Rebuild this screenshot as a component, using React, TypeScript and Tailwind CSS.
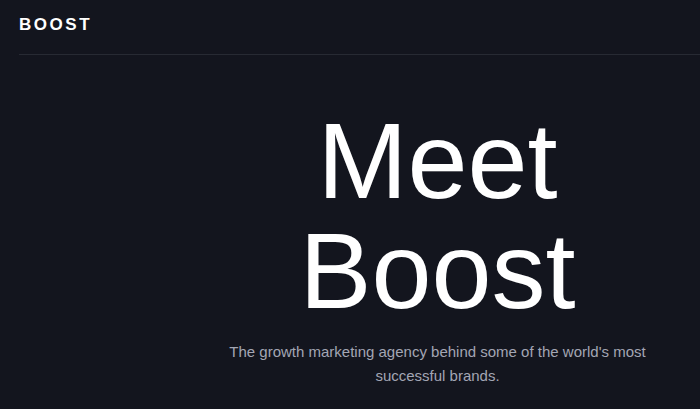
export default function App() {
  return (
    <div
      className="min-h-screen bg-[#13151e] text-white"
      style={{ fontFamily: '"Liberation Sans", Arial, sans-serif' }}
    >
      <header className="ml-[19px] border-b border-[#272a33] pt-[16px] pb-[20px]">
        <div className="text-[17px] leading-[18px] font-bold tracking-[0.15em]">BOOST</div>
      </header>
      <main className="ml-auto flex w-3/4 flex-col items-center pt-[51px] text-center">
        <h1 className="text-[108px] leading-[110px] font-normal">
          Meet
          <br />
          Boost
        </h1>
        <p className="mt-[14px] max-w-md text-[15px] leading-6 text-[#a3a6b4]">
          The growth marketing agency behind some of the world's most successful brands.
        </p>
      </main>
    </div>
  );
}
